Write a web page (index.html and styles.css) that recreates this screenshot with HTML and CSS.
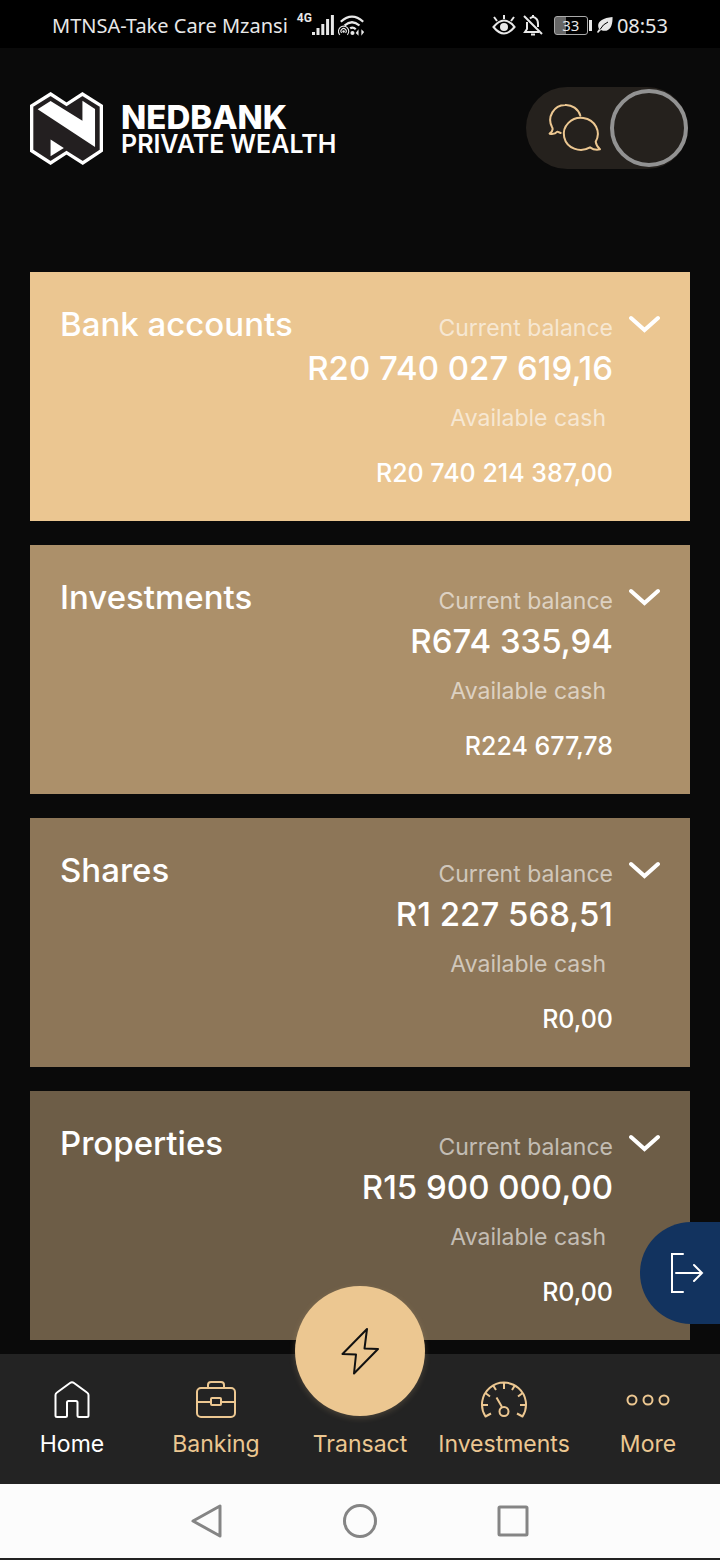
FILE: index.html
```html
<!DOCTYPE html>
<html lang="en">
<head>
    <meta charset="UTF-8">
    <meta name="viewport" content="width=device-width, initial-scale=1.0">
    <title>Nedbank Private Wealth</title>
    <link rel="stylesheet" href="styles.css">
</head>
<body>

    <!-- Phone status bar -->
    <div class="status-bar">
        <div class="status-group">
            <span>MTNSA-Take Care Mzansi</span>
            <span class="network">4G</span>
            <svg class="signal" width="22" height="22" viewBox="0 0 22 22">
                <path d="M1.5 21v-3M6 21v-7M10.800 21v-11M15.600 21V5M20.400 21V1" fill="none" stroke="#e8e8e8" stroke-width="3"/>
            </svg>
            <svg width="28" height="23" viewBox="0 0 30 24">
                <g fill="none" stroke="#e8e8e8" stroke-width="2.400">
                    <path d="M3 8Q15-3 27 8M7 12Q15 5 23 12"/>
                    <path d="M13 15q3-2 6 1"/>
                    <path d="M2 22a5.500 5.500 0 1 1 8 0M4 20a2.800 2.800 0 1 1 4 0" stroke-width="1.200"/>
                </g>
                <circle cx="6" cy="18.500" r="1.300" fill="#e8e8e8"/>
                <circle cx="15.500" cy="20" r="2.200" fill="#e8e8e8"/>
                <path d="M22 16v7l-3-3zM25 23v-7l3 3z" fill="#e8e8e8"/>
            </svg>
        </div>
        <div class="status-group">
            <svg width="24" height="22" viewBox="0 0 24 22" fill="none" stroke="#e8e8e8" stroke-width="2">
                <path d="M1.500 13Q12 0 22.500 13Q12 26 1.500 13ZM12 5V1M5 7L2 3M19 7l3-4"/>
                <circle cx="12" cy="13" r="4" fill="#e8e8e8" stroke="none"/>
            </svg>
            <svg class="bell" width="20" height="22" viewBox="0 0 20 22" fill="none" stroke="#e8e8e8" stroke-width="2">
                <path d="M7 4.500Q10 1.500 13 4.500Q15 6 15 10v3M4 8v7l-2 3h14M1 2l18 18"/>
                <path d="M10 1v2M8 20.500h4"/>
            </svg>
            <div class="battery"><span>33</span></div>
            <svg width="16" height="18" viewBox="0 0 16 18">
                <path d="M15.500 1C4 2-1 7 2 13L0 16l1 1 3-3C11 17 16 12 15.500 1Z" fill="#e8e8e8"/>
                <path d="M3 13.500Q6 8 11 6" fill="none" stroke="#000" stroke-width="1"/>
            </svg>
            <span class="clock">08:53</span>
        </div>
    </div>

    <header class="header">
        <div class="logo">
            <svg width="73" height="73" viewBox="30 36 220 220">
                <path d="M92 42L140 73L188 42L245 78V213L189 250L140 219L92 250L35 213V78Z" fill="#231f20" stroke="#fff" stroke-width="10"/>
                <path d="M53 88L92 63L188 123V62L226 87V202Z" fill="#fff"/>
                <path d="M92 179L132 205L92 230Z" fill="#fff"/>
            </svg>
            <div class="wordmark">
                <span class="wordmark-bank">NEDBANK</span>
                <span class="wordmark-wealth">PRIVATE WEALTH</span>
            </div>
        </div>
        <button class="chat-switch" type="button" aria-label="Chat">
            <svg width="54" height="50" viewBox="0 0 162 150" fill="none" stroke="#ecc791" stroke-width="6" stroke-linecap="round" stroke-linejoin="round">
                <path d="M97 38A45 45 0 0 0 51 6A45 45 0 0 0 12 72Q18 82 5 92Q20 95 28 86L38 90"/>
                <path d="M143 116A51 48 0 1 0 126 133Q140 143 156 139Q145 130 143 116Z"/>
            </svg>
            <span class="chat-knob"></span>
        </button>
    </header>

    <!-- Account groups -->
    <main class="accounts">
        <section class="card card-bank">
            <h2>Bank accounts</h2>
            <div class="balances">
                <span class="label">Current balance</span>
                <span class="amount">R20 740 027 619,16</span>
                <span class="label label-cash">Available cash</span>
                <span class="cash">R20 740 214 387,00</span>
            </div>
            <button class="expand" type="button" aria-label="Expand bank accounts">
                <svg width="31" height="18" viewBox="0 0 31 18"><path d="M2 3l13.500 12L29 3"/></svg>
            </button>
        </section>
        <section class="card card-investments">
            <h2>Investments</h2>
            <div class="balances">
                <span class="label">Current balance</span>
                <span class="amount">R674 335,94</span>
                <span class="label label-cash">Available cash</span>
                <span class="cash">R224 677,78</span>
            </div>
            <button class="expand" type="button" aria-label="Expand investments">
                <svg width="31" height="18" viewBox="0 0 31 18"><path d="M2 3l13.500 12L29 3"/></svg>
            </button>
        </section>
        <section class="card card-shares">
            <h2>Shares</h2>
            <div class="balances">
                <span class="label">Current balance</span>
                <span class="amount">R1 227 568,51</span>
                <span class="label label-cash">Available cash</span>
                <span class="cash">R0,00</span>
            </div>
            <button class="expand" type="button" aria-label="Expand shares">
                <svg width="31" height="18" viewBox="0 0 31 18"><path d="M2 3l13.500 12L29 3"/></svg>
            </button>
        </section>
        <section class="card card-properties">
            <h2>Properties</h2>
            <div class="balances">
                <span class="label">Current balance</span>
                <span class="amount">R15 900 000,00</span>
                <span class="label label-cash">Available cash</span>
                <span class="cash">R0,00</span>
            </div>
            <button class="expand" type="button" aria-label="Expand properties">
                <svg width="31" height="18" viewBox="0 0 31 18"><path d="M2 3l13.500 12L29 3"/></svg>
            </button>
        </section>

        <!-- Logout tab, floats over the right edge -->
        <button class="logout" type="button" aria-label="Log out">
            <svg width="34" height="42" viewBox="0 0 34 42" fill="none" stroke="#fff" stroke-width="2" stroke-linecap="round">
                <path d="M13 2H2v38h11M6 21h26M24 13l8 8l-8 8"/>
            </svg>
        </button>
    </main>

    <!-- Bottom tabs -->
    <nav class="tabs">
        <a class="tab active" href="#home">
            <svg width="48" height="40" viewBox="0 0 48 40">
                <path d="M7.500 15Q7.500 13.500 9 12.500L22 3Q24 1.500 26 3L39 12.500Q40.500 13.500 40.500 15V35.500Q40.500 37 39 37H31Q29.500 37 29.500 35.500V22.500Q29.500 21 28 21H20.500Q19 21 19 22.500V35.500Q19 37 17.500 37H9Q7.500 37 7.500 35.500Z"/>
            </svg>
            <span>Home</span>
        </a>
        <a class="tab" href="#banking">
            <svg width="48" height="40" viewBox="0 0 48 40">
                <rect x="5" y="8" width="38" height="29" rx="4"/>
                <path d="M16 8V5Q16 2 19 2H29Q32 2 32 5V8M5 22H19M29 22H43"/>
                <rect x="19" y="18" width="10" height="7" rx="1"/>
            </svg>
            <span>Banking</span>
        </a>
        <a class="tab tab-transact" href="#transact">
            <span class="transact-circle">
                <svg width="38" height="48" viewBox="0 0 38 48"><path d="M26 2L1.500 27L15 27.500L13 46.500L37 22L23.500 21.500Z"/></svg>
            </span>
            <span>Transact</span>
        </a>
        <a class="tab" href="#investments">
            <svg width="48" height="40" viewBox="0 0 48 40">
                <path d="M11 33.500L5.500 36.500A22 22 0 1 1 42.500 36.500L37 33.500M2.500 25H8M40 25H45.500M6 13.500L10 16.500M42 13.500L38 16.500M13.500 6L16 10M34.500 6L32 10M24 3.500V9M22 27L16.500 17.500"/>
                <circle cx="24" cy="31.500" r="4.500"/>
            </svg>
            <span>Investments</span>
        </a>
        <a class="tab" href="#more">
            <svg width="48" height="40" viewBox="0 0 48 40">
                <circle cx="8" cy="20" r="4.500"/>
                <circle cx="24" cy="20" r="4.500"/>
                <circle cx="40" cy="20" r="4.500"/>
            </svg>
            <span>More</span>
        </a>
    </nav>

    <!-- Android navigation -->
    <div class="system-bar">
        <button type="button" aria-label="Back">
            <svg width="34" height="34" viewBox="0 0 34 34"><path d="M30 2V32L3 17Z"/></svg>
        </button>
        <button type="button" aria-label="Home screen">
            <svg width="34" height="34" viewBox="0 0 34 34"><circle cx="17" cy="17" r="15.500"/></svg>
        </button>
        <button type="button" aria-label="Recent apps">
            <svg width="34" height="34" viewBox="0 0 34 34"><rect x="3" y="3" width="28" height="28" rx="1"/></svg>
        </button>
    </div>

</body>
</html>
```
FILE: styles.css
```css
* {
    box-sizing: border-box;
}

body {
    margin: 0;
    min-height: 100vh;
    display: flex;
    flex-direction: column;
    background-color: #0a0a0a;
    color: white;
    font-family: Inter, "Liberation Sans", sans-serif;
}

button {
    padding: 0;
    border: none;
    background: none;
    cursor: pointer;
}

svg {
    display: block;
    flex: none;
}

/* Phone status bar */
.status-bar {
    display: flex;
    justify-content: space-between;
    height: 48px;
    padding: 0 52px;
    background-color: #000;
    color: #e8e8e8;
    font-family: "Noto Sans", sans-serif;
    font-size: 20px;
}

.status-group {
    display: flex;
    align-items: center;
    gap: 4px;
    padding-top: 2px;
}

.network {
    align-self: flex-start;
    margin: 0 -4px 0 5px;
    padding-top: 9px;
    font-family: Roboto, sans-serif;
    font-size: 12px;
    font-weight: bold;
}

.bell {
    margin: 0 7px 0 3px;
}

.battery {
    position: relative;
    width: 34px;
    height: 19px;
    margin-right: 5px;
    border: 1px solid #aaa;
    border-radius: 3px;
    background: linear-gradient(to right, #666 33%, transparent 33%);
    font-size: 15px;
    line-height: 17px;
    text-align: center;
}

/* battery tip */
.battery::after {
    content: "";
    position: absolute;
    top: 3px;
    right: -5px;
    width: 3px;
    height: 11px;
    background-color: #e8e8e8;
}

/* Header */
.header {
    display: flex;
    justify-content: space-between;
    align-items: center;
    padding: 39px 32px 103px 30px;
}

.logo {
    display: flex;
    align-items: center;
    gap: 18px;
}

.wordmark {
    display: flex;
    flex-direction: column;
    padding-top: 4px;
}

.wordmark-bank {
    font-size: 33px;
    font-weight: 800;
    line-height: 28px;
}

.wordmark-wealth {
    font-size: 25px;
    font-weight: 600;
    line-height: 26px;
}

.chat-switch {
    display: flex;
    align-items: center;
    justify-content: space-between;
    width: 162px;
    height: 82px;
    padding-left: 22px;
    border-radius: 41px;
    background-color: #25211d;
}

.chat-knob {
    width: 78px;
    height: 78px;
    border: 4px solid #929292;
    border-radius: 50%;
}

/* Account cards */
.accounts {
    position: relative;
    display: flex;
    flex-direction: column;
    gap: 24px;
    padding: 0 30px 14px;
}

.card {
    display: flex;
    align-items: flex-start;
    padding: 30px;
}

.card-bank {
    background-color: #ebc691;
}

.card-investments {
    background-color: #ac906a;
}

.card-shares {
    background-color: #8d7658;
}

.card-properties {
    background-color: #6d5d47;
}

.card h2 {
    margin: 0;
    font-size: 33px;
    font-weight: 500;
    line-height: 44px;
}

.balances {
    display: flex;
    flex: 1;
    flex-direction: column;
    align-items: flex-end;
    padding-top: 11px;
    white-space: nowrap;
}

.label {
    color: rgba(255, 255, 255, 0.6);
    font-size: 23px;
    line-height: 30px;
}

.label-cash {
    margin: 10px 7px 22px 0;
}

.amount {
    font-size: 33px;
    font-weight: 500;
    line-height: 50px;
}

.cash {
    font-size: 25px;
    font-weight: 500;
    line-height: 36px;
}

.expand {
    margin: 13px 0 0 16px;
}

.expand path {
    fill: none;
    stroke: white;
    stroke-width: 4;
    stroke-linecap: round;
}

.logout {
    position: absolute;
    right: 0;
    bottom: 30px;
    width: 80px;
    height: 102px;
    padding-left: 30px;
    border-radius: 51px 0 0 51px;
    background-color: #12335f;
}

/* Bottom tabs */
.tabs {
    position: relative;
    display: grid;
    grid-template-columns: repeat(5, 1fr);
    grid-template-rows: 100%;
    height: 130px;
    background-color: #232323;
}

/* the transact circle is taller than the bar and grows out of its top */
.tab {
    display: flex;
    flex-direction: column;
    align-items: center;
    justify-content: flex-end;
    gap: 10px;
    padding-bottom: 26px;
    color: #ecc791;
    font-size: 23px;
    line-height: 28px;
    text-decoration: none;
}

.tab svg {
    fill: none;
    stroke: #ecc791;
    stroke-width: 2;
    stroke-linejoin: round;
}

.active {
    color: white;
}

.active svg {
    stroke: white;
}

.transact-circle {
    display: flex;
    flex: none;
    align-items: center;
    justify-content: center;
    width: 130px;
    height: 130px;
    margin-bottom: 4px;
    border-radius: 50%;
    background-color: #ecc791;
    box-shadow: 0 2px 6px rgba(236, 199, 145, 0.2);
}

.tab .transact-circle svg {
    stroke: #111;
}

/* Android navigation */
.system-bar {
    display: flex;
    align-items: center;
    justify-content: center;
    gap: 119px;
    height: 76px;
    border-bottom: 2px solid #222;
    background-color: #fcfcfc;
}

.system-bar svg {
    fill: none;
    stroke: #858585;
    stroke-width: 3;
    stroke-linejoin: round;
}
```
